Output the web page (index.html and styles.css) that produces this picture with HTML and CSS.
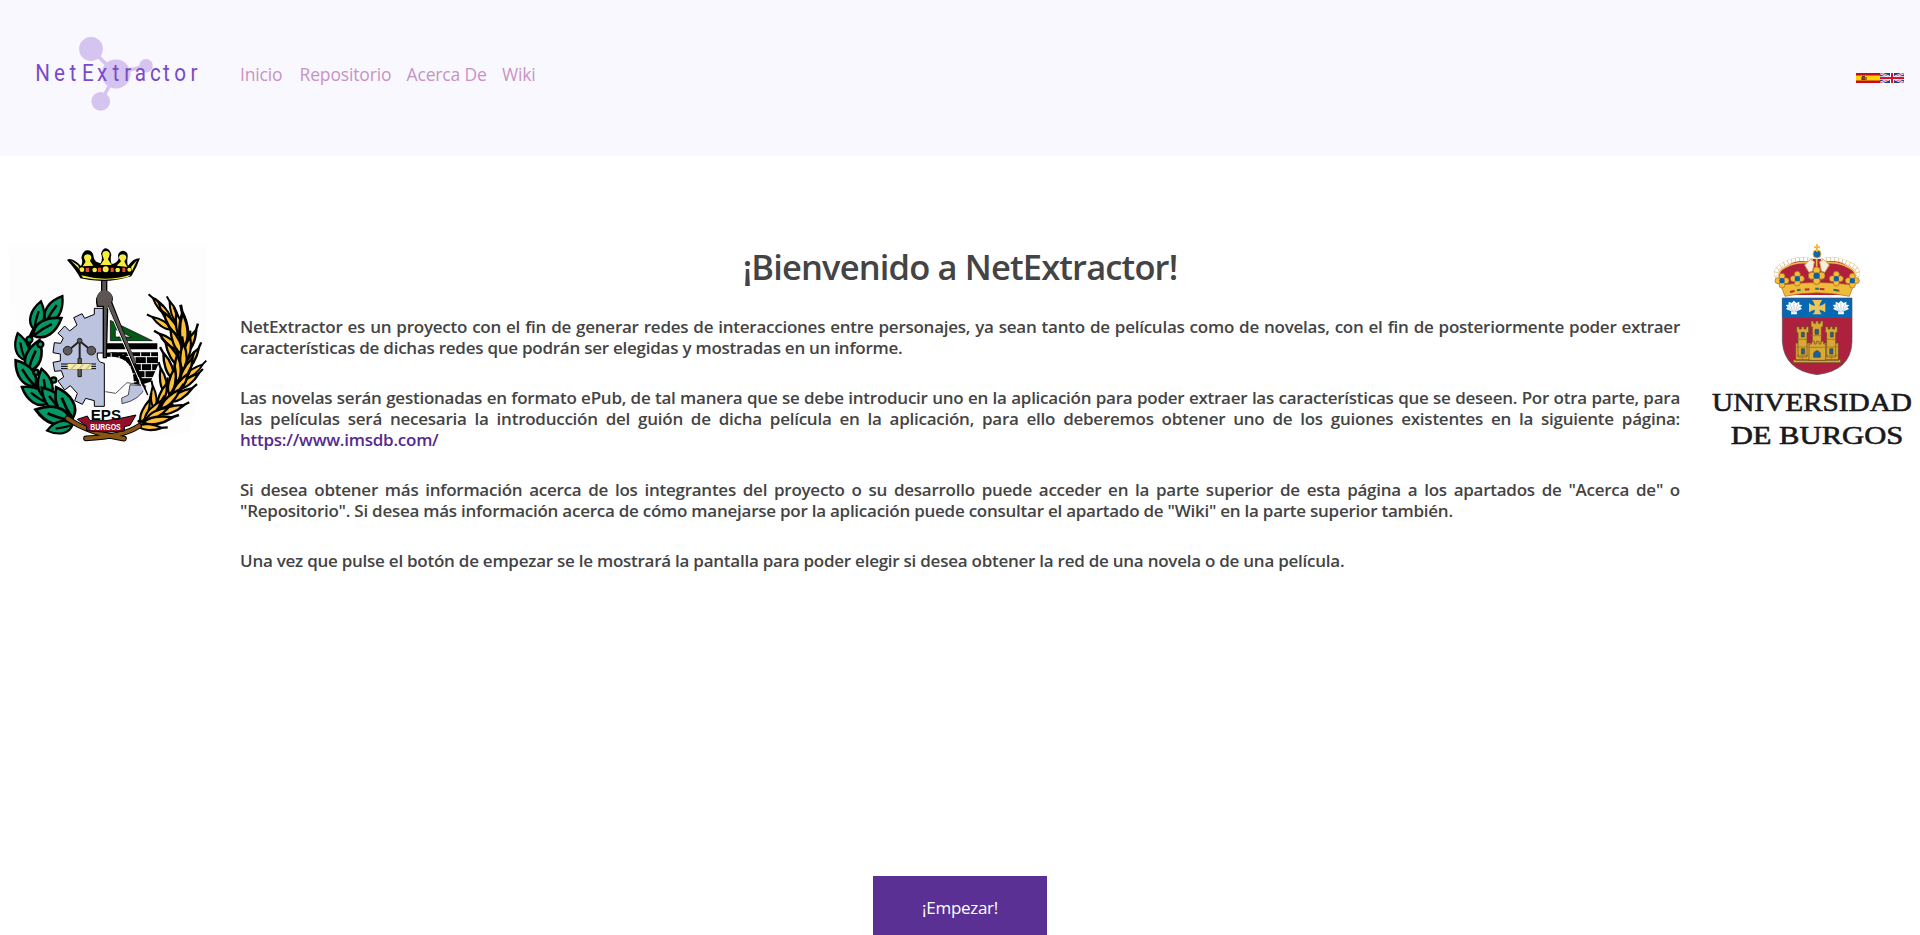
FILE: index.html
```html
<!DOCTYPE html>
<html lang="es">
<head>
<meta charset="utf-8">
<title>NetExtractor</title>
<link rel="stylesheet" href="styles.css">
</head>
<body>
<header class="topbar">
  <svg class="brand" viewBox="0 0 200 156" role="img" aria-label="NetExtractor">
    <g fill="#d5c3f0" stroke="none">
      <path d="M91 49L116 74L146 65.7M116 74L100.7 101.3" fill="none" stroke="#d5c3f0" stroke-width="3.4"/>
      <circle cx="91" cy="49" r="11.9"/><circle cx="116" cy="74" r="14.4"/>
      <circle cx="146" cy="65.7" r="6.8"/><circle cx="100.7" cy="101.4" r="9.3"/>
    </g>
    <text class="brand-text" y="81.5" transform="scale(.86 1)" x="41 62.8 80.7 95.3 112.7 130.7 144.5 156.8 174.5 189.5 202.5 221.5">NetExtractor</text>
  </svg>
  <nav class="nav">
    <a class="nav-inicio">Inicio</a><a class="nav-repo">Repositorio</a><a class="nav-acerca">Acerca De</a><a class="nav-wiki">Wiki</a>
  </nav>
  <div class="flags">
    <svg viewBox="0 0 24 10"><path fill="#c60b1e" d="M0 0h24v10H0z"/><path fill="#ffd400" d="M0 2.5h24v5H0z"/><path fill="#a5701c" d="M5 4h6v3H5z"/><path fill="#593b28" d="M6 3h3v4H6z"/><path fill="#b43b24" d="M7 4h2v2H7z"/></svg>
    <svg viewBox="0 0 24 10"><path fill="#24408f" d="M0 0h24v10H0z"/><path stroke="#fff" stroke-width="2.2" d="M0 0L24 10M24 0L0 10"/><path stroke="#d22a42" stroke-width=".8" d="M0 0L24 10M24 0L0 10"/><path fill="#fff" d="M10 0h4v10h-4zM0 3.3h24v3.4H0z"/><path fill="#cf142b" d="M11 0h2v10h-2zM0 4h24v2H0z"/></svg>
  </div>
</header>
<main class="main">
  <svg class="crest" viewBox="0 0 660 645" role="img" aria-label="EPS Burgos">
    <defs>
      <path id="leaf" d="M0 0C-29-18-25-56 0-88C25-56 29-18 0 0Z"/>
      <path id="vein" d="M0 0Q-4-30 0-58" fill="none"/>
      <g id="bay"><use href="#leaf"/><use href="#vein"/></g>
      <path id="ear" d="M0 0C-12-14-9-44 0-68C11-42 12-14 0 0ZM0-64L-3-84"/>
    </defs>
    <path fill="#fdfdfd" d="M25 28h597v340L570 590 400 625H220L40 470Z"/>
    <g fill="#049866" stroke="#000" stroke-width="7">
      <path d="M196 558Q105 470 82 390Q76 310 120 260" fill="none" stroke-width="14"/>
      <use href="#bay" transform="translate(138 262) rotate(32) scale(1.05)"/>
      <use href="#bay" transform="translate(103 285) rotate(13)"/>
      <use href="#bay" transform="translate(100 302) rotate(58) scale(1.13)"/>
      <use href="#bay" transform="translate(76 375) rotate(-16) scale(.95)"/>
      <use href="#bay" transform="translate(85 408) rotate(20) scale(1.12)"/>
      <use href="#bay" transform="translate(105 453) rotate(-37) scale(1.1)"/>
      <use href="#bay" transform="translate(144 505) rotate(-58) scale(1.05)"/>
      <use href="#bay" transform="translate(144 492) rotate(-12) scale(1.05)"/>
      <use href="#bay" transform="translate(190 530) rotate(-42) scale(1.1)"/>
      <use href="#bay" transform="translate(218 550) rotate(-28) scale(1.2)"/>
      <use href="#bay" transform="translate(212 556) rotate(-73) scale(1.25)"/>
      <use href="#bay" transform="translate(218 569) rotate(-103) scale(.9)"/>
      <circle cx="88" cy="314" r="9"/><circle cx="121" cy="328" r="9"/><circle cx="108" cy="412" r="8"/><circle cx="161" cy="435" r="8"/>
    </g>
    <g fill="#fcbf37" stroke="#000" stroke-width="6">
      <path d="M420 570Q545 480 548 335" fill="none" stroke-width="30"/>
      <path d="M420 566Q540 480 544 325" fill="none" stroke="#fcbf37" stroke-width="7"/>
      <use href="#ear" transform="translate(502 240) rotate(-40)"/>
      <use href="#ear" transform="translate(532 262) rotate(-20)"/>
      <use href="#ear" transform="translate(512 260) rotate(-32)"/>
      <use href="#ear" transform="translate(512 283) rotate(-56)"/>
      <use href="#ear" transform="translate(535 300) rotate(-33) scale(1.2)"/>
      <use href="#ear" transform="translate(545 310) rotate(-12) scale(1.15)"/>
      <use href="#ear" transform="translate(553 335) rotate(-3) scale(1.5)"/>
      <use href="#ear" transform="translate(536 343) rotate(-51) scale(1.1)"/>
      <use href="#ear" transform="translate(543 355) rotate(-23) scale(1.2)"/>
      <use href="#ear" transform="translate(553 358) rotate(26) scale(1.2)"/>
      <use href="#ear" transform="translate(555 378) rotate(12) scale(1.1)"/>
      <use href="#ear" transform="translate(537 392) rotate(-30) scale(1.2)"/>
      <use href="#ear" transform="translate(550 405) rotate(0) scale(1.2)"/>
      <use href="#ear" transform="translate(554 405) rotate(33) scale(1.15)"/>
      <use href="#ear" transform="translate(557 427) rotate(53) scale(.95)"/>
      <use href="#ear" transform="translate(518 430) rotate(-20) scale(1.2)"/>
      <use href="#ear" transform="translate(532 440) rotate(0) scale(1.2)"/>
      <use href="#ear" transform="translate(542 442) rotate(26) scale(1.2)"/>
      <use href="#ear" transform="translate(537 460) rotate(53) scale(1.1)"/>
      <use href="#ear" transform="translate(495 472) rotate(-10) scale(1.1)"/>
      <use href="#ear" transform="translate(508 478) rotate(12) scale(1.2)"/>
      <use href="#ear" transform="translate(518 482) rotate(35) scale(1.2)"/>
      <use href="#ear" transform="translate(510 500) rotate(59) scale(1.15)"/>
      <use href="#ear" transform="translate(463 520) rotate(-4)"/>
      <use href="#ear" transform="translate(475 515) rotate(20) scale(1.1)"/>
      <use href="#ear" transform="translate(483 520) rotate(45) scale(1.2)"/>
      <use href="#ear" transform="translate(477 535) rotate(72) scale(1.15)"/>
      <use href="#ear" transform="translate(422 562) rotate(22) scale(1.1)"/>
      <use href="#ear" transform="translate(435 552) rotate(42) scale(1.1)"/>
      <use href="#ear" transform="translate(440 552) rotate(62) scale(1.1)"/>
      <use href="#ear" transform="translate(430 563) rotate(80) scale(1.3)"/>
      <use href="#ear" transform="translate(415 574) rotate(94) scale(1.05)"/>
    </g>
    <path fill="#bcc3df" stroke="#000" stroke-width="3" d="M313 220H283V238L254 250 246 236 221 248 231 270 209 288 194 273 174 295 190 309 182 325 163 323 159 353 181 357V378L159 382 164 409 184 407 191 426 174 438 194 465 211 452 232 475 224 497 247 508 257 490 283 497V514H313V385Q288 382 292 354H313Z"/>
    <path d="M316 325h156v18H316zM325 352H474V390L452 440 410 454Q409 374 325 352Z"/>
    <path fill="none" stroke="#fff" stroke-width="3" d="M358 365h115M382 386h91M397 407h74M407 428h54M390 352v13M422 352v13M452 352v13M405 365v21M439 365v21M424 386v21M455 386v21M435 407v21M420 428v21M325 360l9-14M360 372l10-15M383 392l12-9M393 414l16-8"/>
    <path fill="none" stroke="#000" stroke-width="13" stroke-dasharray="22 3" d="M310 360Q408 348 408 447"/>
    <path fill="#fff" stroke="#000" stroke-width="2" d="M316 470l31 5 34-32 53 8"/>
    <path fill="#bcc3df" stroke="#000" stroke-width="2" d="M390 449l48 4Q420 496 366 506l-1-17 20-9Z"/>
    <path fill="#035916" fill-rule="evenodd" stroke="#000" stroke-width="2" d="M331 256L457 317H331ZM346 283v23h48Z"/>
    <path fill="#595454" stroke="#000" stroke-width="4" d="M305 125h15v44q22 11 15 33L443 480 323 213l-4 155h-9V214h-18q-8-28 13-45Z"/>
    <circle cx="314" cy="189" r="23" fill="#5c5552"/>
    <path stroke="#fff" stroke-width="3" d="M323 215L436 478"/>
    <path stroke="#5c5552" stroke-width="8" d="M329 205L405 385"/>
    <g fill="#5f5b5c" stroke="#222" stroke-width="3"><path d="M239 318V425M239 318L207 345M239 318L272 345" fill="none" stroke-width="6"/><path d="M234 370h10v55h-10z"/><circle cx="203" cy="347" r="13"/><circle cx="274" cy="347" r="13"/><circle cx="239" cy="317" r="7"/></g>
    <path stroke="#000" stroke-width="3" d="M183 387h105M183 394h105M183 401h105"/>
    <path fill="#f7ed9a" d="M203 387h71v15h-71z"/><path stroke="#c4c0b6" stroke-width="5" d="M214 402l14-15M237 402l14-15M259 402l14-15"/>
    <path fill="#000" d="M201 75Q215 65 243 93Q250 80 244 69Q248 45 264 46Q280 48 281 67Q285 83 302 85Q309 69 303 56Q308 40 318 40Q330 43 334 59Q330 74 335 87Q351 86 356 70Q349 53 368 47Q385 48 383 67Q380 82 384 92Q401 69 420 70Q411 96 394 124Q318 149 241 130Q228 104 201 75Z"/>
    <g fill="#f7ed3d"><path d="M212 76L234 91 240 104ZM252 69a11 11 0 1 1 22 0L270 78 280 92 248 94 257 80ZM307 59a11 11 0 1 1 22 0L324 73 335 90 301 90 312 74ZM357 69a11 11 0 1 1 22 0L373 80 382 96 350 92 363 79ZM411 76L393 96 396 108ZM244 121Q318 142 392 119L383 127Q317 141 249 128Z"/><circle cx="246" cy="104" r="7"/><circle cx="284" cy="105" r="7"/><circle cx="317" cy="103" r="9"/><circle cx="353" cy="105" r="7"/><circle cx="388" cy="104" r="6"/></g>
    <path fill="#ef492b" d="M257 98h10v13h-10zM294 98h9v13h-9zM332 98h9v13h-9zM367 98h9v13h-9z"/>
    <path fill="none" stroke="#000" stroke-width="17" stroke-linecap="round" d="M202 550Q260 593 372 611M417 573Q370 605 258 610"/>
    <path fill="none" stroke="#885614" stroke-width="11" stroke-linecap="round" d="M202 550Q260 593 372 611M417 573Q370 605 258 610"/>
    <path fill="#940e28" stroke="#000" stroke-width="3" d="M232 553l30-10 8 14Q318 561 366 549l42-9-18 31-17 4v13Q318 596 260 587v-13Z"/>
    <text class="eps" x="272" y="554" textLength="91" lengthAdjust="spacingAndGlyphs">EPS</text>
    <text class="burgos" x="271" y="586" textLength="91" lengthAdjust="spacingAndGlyphs">BURGOS</text>
  </svg>
  <section class="content">
    <h1 class="title">¡Bienvenido a NetExtractor!</h1>
    <p>NetExtractor es un proyecto con el fin de generar redes de interacciones entre personajes, ya sean tanto de películas como de novelas, con el fin de posteriormente poder extraer características de dichas redes que podrán ser elegidas y mostradas en un informe.</p>
    <p>Las novelas serán gestionadas en formato ePub, de tal manera que se debe introducir uno en la aplicación para poder extraer las características que se deseen. Por otra parte, para las películas será necesaria la introducción del guión de dicha película en la aplicación, para ello deberemos obtener uno de los guiones existentes en la siguiente página: <a class="link">https://www.imsdb.com/</a></p>
    <p>Si desea obtener más información acerca de los integrantes del proyecto o su desarrollo puede acceder en la parte superior de esta página a los apartados de "Acerca de" o "Repositorio". Si desea más información acerca de cómo manejarse por la aplicación puede consultar el apartado de "Wiki" en la parte superior también.</p>
    <p>Una vez que pulse el botón de empezar se le mostrará la pantalla para poder elegir si desea obtener la red de una novela o de una película.</p>
  </section>
  <svg class="crest" viewBox="0 0 660 645" role="img" aria-label="Universidad de Burgos">
    <defs>
      <g id="shell"><path fill="#fff" d="M-9 19L-8 10-24 3-19-2-25-9-16-10-16-19-7-15 0-22 7-15 16-19 16-10 25-9 19-2 24 3 8 10 9 19Z"/><path stroke="#7d9cc6" stroke-width="1.5" d="M0 14V-15M-3 13L-12-13M3 13L12-13M-5 12L-19-6M5 12L19-6"/></g>
      <g id="flower" fill="#f6bc35" stroke="#98672a" stroke-width="2"><circle cy="-13" r="9"/><circle cx="-12" r="9"/><circle cx="12" r="9"/><circle cy="13" r="9"/><circle r="8" fill="#0b62a9" stroke="none"/></g>
      <path id="tower" d="M-18-48h8v7h6v-7h8v7h6v-7h8v18h-5V43h-27V-30h-4Z"/>
    </defs>
    <path fill="#b01f3b" d="M240 145Q225 112 259 94Q298 67 351 72Q405 66 444 94Q476 113 460 151L444 180H256Z"/>
    <path fill="none" stroke="#e9b849" stroke-width="5" d="M246 133Q225 111 258 96Q297 76 340 87M456 133Q478 111 443 96Q405 76 360 87M350 72v57"/>
    <path fill="none" stroke="#d9b577" stroke-width="12" d="M235 133Q215 105 253 86Q290 66 337 76M467 133Q488 105 448 86Q412 66 364 76"/>
    <path fill="none" stroke="#fff" stroke-width="10" stroke-dasharray="10 2" d="M235 133Q215 105 253 86Q290 66 337 76M467 133Q488 105 448 86Q412 66 364 76"/>
    <path fill="#f5eee1" stroke="#d6a64a" stroke-width="3" d="M327 112L314 90 331 73 343 80 338 108ZM374 112L388 90 371 73 359 80 364 108Z"/>
    <circle cx="351" cy="57" r="12" fill="#1167a9" stroke="#e0a735" stroke-width="3"/><path stroke="#eebc3f" stroke-width="6" d="M351 28v22M342 37h18"/>
    <path fill="#efbb3a" stroke="#a46822" stroke-width="2" d="M242 150Q350 135 461 150L448 184Q350 163 255 184Z"/>
    <use href="#flower" x="246" y="137"/><use href="#flower" x="292" y="131"/><use href="#flower" transform="translate(350 122) scale(1.2)"/><use href="#flower" x="409" y="131"/><use href="#flower" x="457" y="137"/>
    <path fill="none" stroke="#bb2736" stroke-width="6" stroke-dasharray="14 31" d="M270 171Q350 153 438 171"/>
    <path fill="none" stroke="#2a7360" stroke-width="6" stroke-dasharray="11 44" d="M291 166Q350 156 417 167"/>
    <path fill="#ae213e" stroke="#555" stroke-width="2" d="M247 189H456V320Q453 407 351 419Q253 406 247 320Z"/>
    <path fill="#0568b3" d="M247 190H456V249H247z"/>
    <use href="#shell" x="282" y="219"/><use href="#shell" x="423" y="219"/>
    <path fill="#eec65a" d="M336 195h31q-5 4-9 17 8 1 18-8v28q-10-8-18-8 4 13 9 14h-31q8-3 9-14-8 0-18 8v-28q9 9 18 8-3-12-9-17Z"/>
    <g fill="#d9a934" stroke="#654926" stroke-width="2">
      <path d="M280 374H422V383H280ZM287 324H415V376H287Z"/><use href="#tower" x="308" y="323"/><use href="#tower" x="394" y="323"/><use href="#tower" x="351" y="306"/>
      <path d="M327 327h8v-8h8v8h6v-8h8v8h6v-8h8v8h6v49H327Z"/>
    </g>
    <path fill="none" stroke="#91672b" stroke-width="2" d="M290 313h34M289 336h36M290 361h35M377 313h34M378 336h35M378 361h35M332 302h36M328 337h48M307 362v13M394 362v13"/>
    <path fill="#1262a0" stroke="#604625" stroke-width="2" d="M345 283h11v15h-11zM304 292h9v14h-9zM391 292h9v14h-9zM304 341h10v16h-10zM389 341h10v16h-10zM341 367V354q10-15 20 0v13Z"/>
    <text class="uni" x="36" y="528" textLength="600" lengthAdjust="spacingAndGlyphs">UNIVERSIDAD</text>
    <text class="uni" x="92" y="627" textLength="518" lengthAdjust="spacingAndGlyphs">DE BURGOS</text>
  </svg>
</main>
<footer class="actions"><button class="start">¡Empezar!</button></footer>
</body>
</html>
```
FILE: styles.css
```css
* { box-sizing: border-box; }
body { margin: 0; height: 100vh; display: flex; flex-direction: column; overflow: hidden; background: #fff; color: #444; font-family: "Open Sans", "Noto Sans", sans-serif; }
.topbar { height: 156px; flex: none; display: flex; align-items: center; padding-right: 16px; background: #f9f8fe; }
.brand { width: 200px; height: 156px; margin-right: 40px; }
.brand-text { font: 400 24px Roboto, sans-serif; fill: #794bc7; }
.nav { flex: 1; display: flex; gap: 16px; font-size: 17.5px; line-height: 24px; padding-bottom: 8px; color: #c793c5; letter-spacing: -.15px; }
.nav a { white-space: nowrap; }
.nav-inicio { width: 43.5px; }
.nav-repo { width: 91px; }
.nav-acerca { width: 79.5px; }
.flags { display: flex; }
.flags svg { width: 24px; height: 10px; }
.main { flex: 1; display: grid; grid-template-columns: 220px 1440px 220px; justify-content: space-between; padding-top: 79px; }
.crest { width: 220px; height: 215px; }
.eps { font: 700 43px "Liberation Sans", sans-serif; }
.burgos { font: 700 27px "Liberation Sans", sans-serif; fill: #fff; }
.uni { font: 400 78px "Liberation Serif", serif; fill: #191919; stroke: #191919; stroke-width: 1.8px; }
.content { font-size: 17px; font-weight: 600; line-height: 21px; letter-spacing: -.25px; text-align: justify; }
.content p { margin: 0 0 29px; }
.title { margin: 9px 0 26px; font-size: 34.5px; font-weight: 600; line-height: 46px; letter-spacing: -.85px; text-align: center; }
.link { color: #552a91; }
.actions { height: 59px; flex: none; display: flex; justify-content: center; }
.start { width: 174px; padding: 3px 0 0; border: 0; background: #5a3095; color: #fff; font: 400 17px "Open Sans", sans-serif; letter-spacing: -.3px; }
```
